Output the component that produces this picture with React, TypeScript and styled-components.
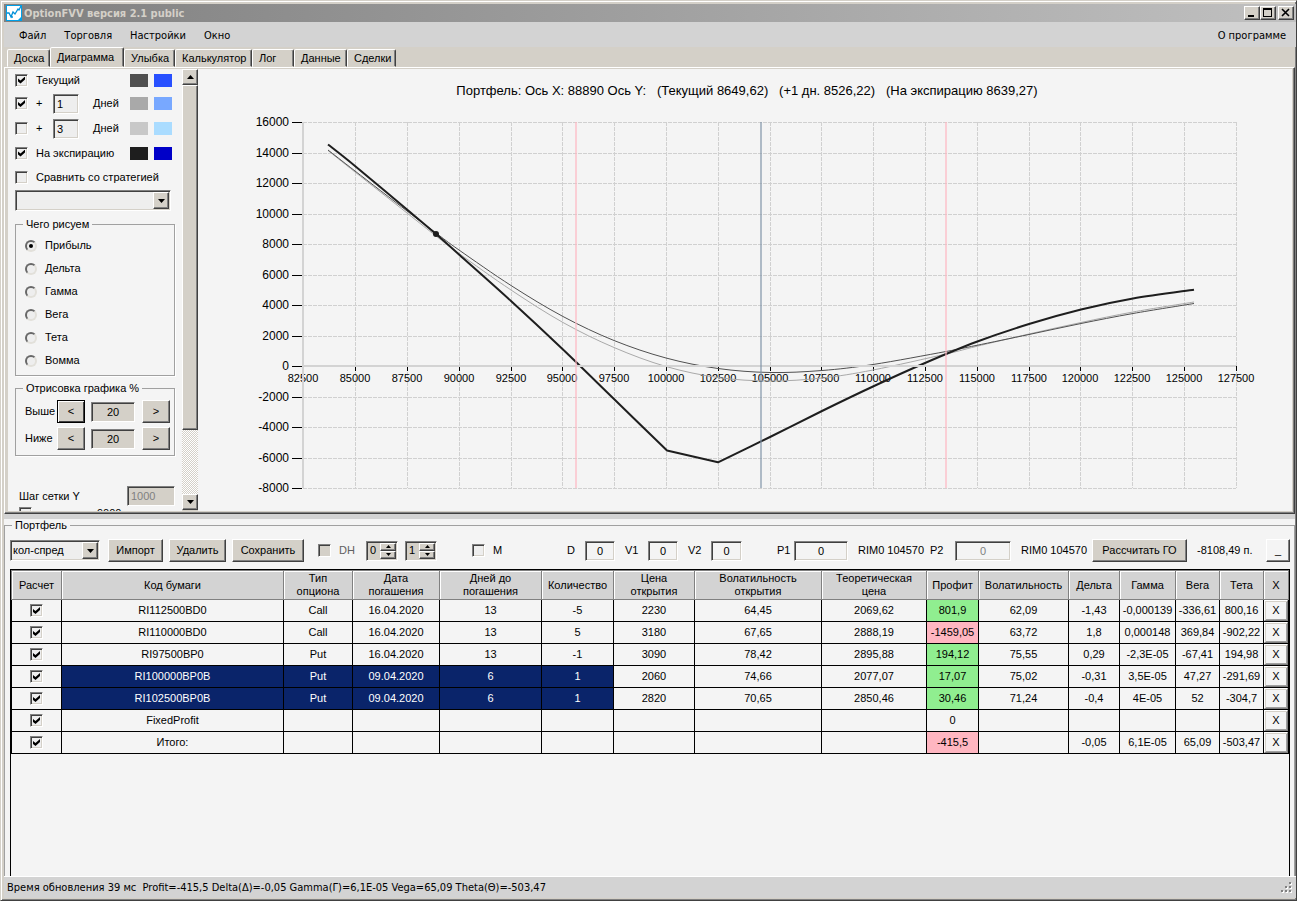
import React from "react";
import styled, { createGlobalStyle, css } from "styled-components";

const face = "#d4d0c8";
const paper = "#f4f4f4";
const bar = "#d3d3d3";
const shade = "#808080";
const dark = "#404040";

const raised = css`
  border: 1px solid;
  border-color: #fff ${dark} ${dark} #fff;
  box-shadow: inset -1px -1px 0 ${shade};
`;

const sunken = css`
  border: 1px solid;
  border-color: ${shade} #fff #fff ${shade};
  box-shadow: inset 1px 1px 0 ${dark}, inset -1px -1px 0 ${face};
`;

const GlobalStyle = createGlobalStyle`
  *, *::before, *::after { box-sizing: border-box; }
  body {
    margin: 0;
    background: ${face};
    color: #000;
    font-family: "Liberation Sans", Arial, sans-serif;
    font-size: 11px;
    line-height: 13px;
  }
  button, input, select { font: inherit; color: inherit; margin: 0; border-radius: 0; }
`;

const Window = styled.div`
  min-height: 100vh;
  display: flex;
  flex-direction: column;
  background: ${face};
  border: 1px solid;
  border-color: ${face} ${dark} ${dark} ${face};
  box-shadow: inset 1px 1px 0 #fff, inset -1px -1px 0 ${shade};
  padding: 3px 0 2px 3px;
`;

const TitleBar = styled.header`
  height: 18px;
  display: flex;
  align-items: center;
  gap: 2px;
  padding: 0 2px;
  background: linear-gradient(to right, #808080, #c0c0c0);
`;

const Title = styled.h1`
  flex: 1;
  margin: 0;
  color: ${face};
  font-family: "DejaVu Sans Condensed", Tahoma, sans-serif;
  font-size: 11px;
  font-weight: bold;
`;

const CaptionButtons = styled.div`
  display: flex;
`;

const CaptionButton = styled.button`
  ${raised}
  width: 16px;
  height: 14px;
  padding: 0;
  display: grid;
  place-items: center;
  background: ${face};
  &:last-child { margin-left: 2px; }
`;

const MenuBar = styled.nav`
  height: 25px;
  display: flex;
  align-items: center;
  background: ${bar};
  padding: 2px 1px 0 6px;
`;

const MenuItem = styled.button`
  border: 0;
  background: none;
  padding: 0 9px;
  font-family: "DejaVu Sans Condensed", Tahoma, sans-serif;
  &:last-child { margin-left: auto; }
`;

const TabStrip = styled.div`
  height: 20px;
  display: flex;
  align-items: flex-end;
  padding-left: 3px;
`;

const Tab = styled.button<{ $active?: boolean; $width: number }>`
  width: ${(p) => p.$width}px;
  height: ${(p) => (p.$active ? 20 : 18)}px;
  flex: none;
  white-space: nowrap;
  padding: 0 0 0 6px;
  text-align: left;
  background: ${face};
  border: 1px solid;
  border-color: #fff ${dark} transparent #fff;
  border-radius: 2px 2px 0 0;
  box-shadow: inset -1px 0 0 ${shade};
`;

const TabPage = styled.section`
  height: 447px;
  flex: none;
  display: flex;
  border: 1px solid;
  border-color: #fff ${dark} ${dark} #fff;
  box-shadow: inset -1px -1px 0 ${shade};
  margin-right: 1px;
  padding: 1px 2px 3px 3px;
`;

const Sidebar = styled.aside`
  width: 174px;
  height: 442px;
  flex: none;
  overflow: hidden;
  background: ${paper};
  padding: 0 7px;
`;

const OptionRow = styled.div<{ $height: number; $indent?: number }>`
  height: ${(p) => p.$height}px;
  padding-left: ${(p) => p.$indent || 0}px;
  display: flex;
  align-items: center;
`;

const OptionLabel = styled.label<{ $width?: number; $gap?: number }>`
  display: flex;
  align-items: center;
  gap: ${(p) => p.$gap || 8}px;
  white-space: nowrap;
  width: ${(p) => (p.$width ? p.$width + "px" : "auto")};
`;

const Swatches = styled.span`
  display: flex;
  gap: 6px;
  margin-left: auto;
  margin-right: 3px;
`;

const Swatch = styled.button<{ $color: string }>`
  width: 18px;
  height: 13px;
  border: 0;
  padding: 0;
  background: ${(p) => p.$color};
`;

const Check = styled.input.attrs({ type: "checkbox" })`
  ${sunken}
  appearance: none;
  flex: none;
  width: 13px;
  height: 13px;
  background: ${(p) => (p.disabled ? face : "#eee")};
  display: grid;
  place-items: center;
  &:checked::before {
    content: "";
    width: 7px;
    height: 7px;
    background: #000;
    clip-path: polygon(0 28%, 36% 57%, 100% 0, 100% 43%, 36% 100%, 0 71%);
  }
`;

const Radio = styled.input.attrs({ type: "radio" })`
  appearance: none;
  flex: none;
  width: 12px;
  height: 12px;
  border: 2px solid;
  border-color: #686868 #e2e0da #e2e0da #686868;
  border-radius: 50%;
  background: #eee;
  display: grid;
  place-items: center;
  &:checked::before {
    content: "";
    width: 4px;
    height: 4px;
    border-radius: 50%;
    background: #000;
  }
`;

const TextBox = styled.input<{ $width: number; $center?: boolean; $fill?: string }>`
  ${sunken}
  width: ${(p) => p.$width}px;
  height: 20px;
  flex: none;
  padding: 0 3px;
  outline: 0;
  text-align: ${(p) => (p.$center ? "center" : "left")};
  background: ${(p) => p.$fill || paper};
  &:disabled { color: ${shade}; }
`;

const DaysWord = styled.span`
  margin-left: 14px;
`;

const SelectBox = styled.span<{ $width: number }>`
  ${sunken}
  width: ${(p) => p.$width}px;
  height: 21px;
  display: flex;
  padding: 1px;
  background: #eee;
`;

const Select = styled.select`
  appearance: none;
  flex: 1;
  min-width: 0;
  border: 0;
  padding: 0 1px;
  outline: 0;
  background: transparent;
`;

const Arrow = styled.span`
  ${raised}
  width: 16px;
  display: grid;
  place-items: center;
  background: ${face};
`;

const Group = styled.fieldset`
  min-width: 0;
  margin: 6px 0 0;
  padding: 3px 4px 3px 9px;
  width: 160px;
  border: 1px solid #a0a0a0;
  box-shadow: 1px 1px 0 #fff;
  & > legend { padding: 0 3px; margin-left: -2px; }
`;

const GroupTitle = styled.legend`
  line-height: 13px;
`;

const StepRow = styled.div`
  height: 27px;
  display: grid;
  grid-template-columns: 32px 28px 6px 44px 7px 28px;
  align-items: center;
  & > :nth-child(3) { grid-column: 4; }
  & > :nth-child(4) { grid-column: 6; }
`;

const Button = styled.button<{ $width: number; $focus?: boolean; $fill?: string }>`
  ${raised}
  width: ${(p) => p.$width}px;
  height: 23px;
  padding: 0;
  white-space: nowrap;
  background: ${(p) => p.$fill || face};
  ${(p) => p.$focus && "border-color: #000; box-shadow: inset 1px 1px 0 #fff, inset -1px -1px 0 #404040;"}
`;

const ScrollBar = styled.div`
  width: 16px;
  flex: none;
  display: flex;
  flex-direction: column;
  background: repeating-conic-gradient(#fff 0 25%, ${face} 0 50%) 0 0 / 2px 2px;
`;

const ScrollButton = styled.button`
  ${raised}
  height: 16px;
  padding: 0;
  display: grid;
  place-items: center;
  background: ${face};
  &:last-child { margin-top: auto; }
`;

const ScrollThumb = styled.div`
  ${raised}
  height: 345px;
  background: ${face};
`;

const ChartSvg = styled.svg`
  flex: 1;
  min-width: 0;
  height: 442px;
  background: ${paper};
  font-family: "Liberation Sans", Arial, sans-serif;
`;

const Bottom = styled.main`
  flex: 1;
  display: flex;
  background: ${paper};
  border-top: 5px solid ${bar};
  margin-right: 1px;
`;

const Portfolio = styled.fieldset`
  flex: 1;
  min-width: 0;
  display: flex;
  flex-direction: column;
  margin: 0;
  padding: 0 4px 0 5px;
  border: 1px solid #a0a0a0;
  border-bottom: 0;
  & > legend { padding: 0 3px; margin-left: 2px; }
`;

const Toolbar = styled.div`
  height: 37px;
  display: grid;
  grid-template-columns: 98px 61px 63px 86px 48px 39px 67px 95px 58px 63px 89px 81px 72px 91px 71px 105px 1fr 24px;
  align-items: center;
  white-space: nowrap;
`;

const Field = styled.label<{ $width?: number; $muted?: boolean }>`
  width: ${(p) => (p.$width ? p.$width + "px" : "auto")};
  display: flex;
  align-items: center;
  justify-content: ${(p) => (p.$width ? "space-between" : "flex-start")};
  gap: ${(p) => (p.$width ? 0 : 8)}px;
  color: ${(p) => (p.$muted ? "#606060" : "#000")};
`;

const Spinner = styled.span`
  ${sunken}
  width: 32px;
  height: 20px;
  display: flex;
  padding: 1px;
  background: ${face};
`;

const SpinValue = styled.input`
  width: 12px;
  border: 0;
  padding: 0 0 0 2px;
  background: none;
`;

const SpinButtons = styled.span`
  flex: 1;
  display: grid;
  grid-template-rows: 1fr 1fr;
`;

const SpinButton = styled.button`
  ${raised}
  padding: 0;
  display: grid;
  place-items: center;
  background: ${face};
`;

const GridFrame = styled.div`
  flex: 1;
  border: 1px solid #000;
  border-bottom: 0;
`;

const Grid = styled.table`
  width: 100%;
  table-layout: fixed;
  border-collapse: separate;
  border-spacing: 0;
`;

const HeadCell = styled.th`
  height: 30px;
  padding: 0;
  font-weight: normal;
  background: ${bar};
  border: solid ${shade};
  border-width: 1px 1px 1px 0;
  box-shadow: inset 1px 1px 0 #fff;
  white-space: pre-line;
  &:first-child { border-left-width: 1px; }
`;

const Cell = styled.td<{ $tone?: "good" | "bad" | "selected" }>`
  height: 22px;
  padding: 0;
  text-align: center;
  white-space: nowrap;
  border: solid #000;
  border-width: 0 1px 1px 0;
  background: ${(p) => ({ good: "#90ee90", bad: "#ffb6c1", selected: "#0a246a", none: paper })[p.$tone || "none"]};
  color: ${(p) => (p.$tone === "selected" ? "#fff" : "#000")};
  &:first-child { border-left-width: 1px; }
  & > input { margin: 0 auto; }
`;

const DeleteButton = styled.button`
  display: block;
  width: 100%;
  height: 21px;
  padding: 0;
  border: 1px solid;
  border-color: #fff ${shade} ${shade} #fff;
  box-shadow: inset 1px 1px 0 ${face}, inset -1px -1px 0 #a0a0a0;
  background: ${paper};
`;

const StatusBar = styled.footer`
  height: 22px;
  flex: none;
  display: flex;
  align-items: center;
  justify-content: space-between;
  padding: 0 3px;
  border-top: 1px solid #fff;
  background: ${bar};
  font-family: "DejaVu Sans Condensed", Tahoma, sans-serif;
  white-space: pre;
`;

const Triangle = ({ up, small }: { up?: boolean; small?: boolean }) => (
  <svg width={small ? 5 : 7} height={small ? 3 : 4} viewBox="0 0 7 4" aria-hidden="true">
    <path d={up ? "M0 4h7L3.500 0z" : "M0 0h7L3.500 4z"} />
  </svg>
);

const tabs: [string, number][] = [
  ["Доска", 43], ["Диаграмма", 74], ["Улыбка", 51], ["Калькулятор", 77],
  ["Лог", 42], ["Данные", 53], ["Сделки", 49],
];

const metrics = ["Прибыль", "Дельта", "Гамма", "Вега", "Тета", "Вомма"];

type Point = [number, number];

const currentCurve: Point[] = [
  [328, 150], [355, 171], [407, 211], [436, 233], [459, 250], [511, 285.500], [563, 316.500], [614, 340.500], [666, 358],
  [718, 368.500], [770, 372.500], [822, 370.500], [873, 364.500], [946, 351.500], [976, 345.500],
  [1029, 334.500], [1081, 323.500], [1133, 313.500], [1194, 303.500],
];

const nextDayCurve: Point[] = [
  [328, 150.500], [355, 172], [407, 213], [436, 236], [459, 253.500], [511, 290], [563, 322.500], [614, 347.500],
  [666, 366.500], [718, 377.500], [770, 381], [822, 378], [873, 370], [946, 354], [976, 346.500],
  [1029, 334], [1081, 322.500], [1133, 312], [1194, 302],
];

const expiryLeft: Point[] = [
  [328, 144.500], [355, 166], [407, 209.500], [436, 234], [459, 254.500], [511, 301], [563, 349.500], [614, 399], [667, 450.500],
];

const expiryRight: Point[] = [
  [718, 462.300], [770, 437], [822, 411], [873, 386.500], [925, 363], [976, 342], [1029, 324],
  [1081, 309.500], [1133, 298.500], [1194, 289.700],
];

/* Catmull-Rom spline through the points, written as cubic Béziers. */
function smooth(points: Point[]): string {
  let d = `M${points[0][0]} ${points[0][1]}`;
  for (let i = 0; i < points.length - 1; i++) {
    const p0 = points[Math.max(i - 1, 0)];
    const p1 = points[i];
    const p2 = points[i + 1];
    const p3 = points[Math.min(i + 2, points.length - 1)];
    d += ` C${p1[0] + (p2[0] - p0[0]) / 6} ${p1[1] + (p2[1] - p0[1]) / 6}`;
    d += ` ${p2[0] - (p3[0] - p1[0]) / 6} ${p2[1] - (p3[1] - p1[1]) / 6} ${p2[0]} ${p2[1]}`;
  }
  return d;
}

const xTicks = Array.from({ length: 19 }, (_, i) => 82500 + i * 2500);
const yTicks = Array.from({ length: 13 }, (_, i) => -8000 + i * 2000);
const xPos = (v: number) => Math.round(303.400 + ((v - 82500) * 932.500) / 45000);
const yPos = (v: number) => Math.round(366 - (v * 244) / 16000);

function Chart() {
  return (
    <ChartSvg viewBox="198 69 1094 442" role="img" aria-label="Диаграмма портфеля">
      <text x="747" y="95" fontSize="13" textAnchor="middle" xmlSpace="preserve">
        {"Портфель: Ось X: 88890 Ось Y:\u00a0\u00a0 (Текущий 8649,62)\u00a0\u00a0 (+1 дн. 8526,22)\u00a0\u00a0 (На экспирацию 8639,27)"}
      </text>
      <g stroke="#d0d0d0" strokeDasharray="4 1" shapeRendering="crispEdges">
        {xTicks.slice(1).map((v) => <line key={v} x1={xPos(v)} x2={xPos(v)} y1="122" y2="488" />)}
        {yTicks.filter((v) => v !== 0).map((v) => <line key={v} x1="303" x2="1236" y1={yPos(v)} y2={yPos(v)} />)}
      </g>
      <g stroke="#000" shapeRendering="crispEdges">
        {xTicks.map((v) => <line key={v} x1={xPos(v)} x2={xPos(v)} y1="366" y2="371" />)}
        {yTicks.map((v) => <line key={v} x1="292" x2="302" y1={yPos(v)} y2={yPos(v)} />)}
      </g>
      <g fontSize="12" textAnchor="end">
        {yTicks.map((v) => <text key={v} x="289" y={yPos(v) + 4}>{v}</text>)}
      </g>
      <g fontSize="11" textAnchor="middle">
        {xTicks.map((v) => <text key={v} x={xPos(v)} y="382">{v}</text>)}
      </g>
      <g fill="none" strokeLinejoin="round">
        <path d={smooth(nextDayCurve)} stroke="#a9a9a9" />
        <path d={smooth(currentCurve)} stroke="#505050" />
        <path d={smooth(expiryLeft) + smooth(expiryRight).replace("M", " L")} stroke="#1e1e1e" strokeWidth="2" />
      </g>
      <g stroke="#d3d3d3" strokeWidth="2" shapeRendering="crispEdges">
        <line x1="303" x2="303" y1="122" y2="488" />
        <line x1="303" x2="1236" y1="366" y2="366" />
      </g>
      <g strokeWidth="2" shapeRendering="crispEdges" opacity="0.6">
        <line x1="576" x2="576" y1="122" y2="488" stroke="#ffb6c1" />
        <line x1="761" x2="761" y1="122" y2="488" stroke="#8094a8" />
        <line x1="946" x2="946" y1="122" y2="488" stroke="#ffb6c1" />
      </g>
      <circle cx="436" cy="234" r="3" fill="#1e1e1e" />
    </ChartSvg>
  );
}

function ColorPair({ a, b }: { a: string; b: string }) {
  return (
    <Swatches>
      <Swatch $color={a} aria-label="Цвет до" />
      <Swatch $color={b} aria-label="Цвет после" />
    </Swatches>
  );
}

function Settings() {
  return (
    <Sidebar>
      <OptionRow $height={22}>
        <OptionLabel><Check defaultChecked />Текущий</OptionLabel>
        <ColorPair a="#505050" b="#2850ff" />
      </OptionRow>
      <OptionRow $height={25}>
        <OptionLabel $width={38}><Check defaultChecked />+</OptionLabel>
        <TextBox $width={26} $fill="#eee" defaultValue="1" aria-label="Дней вперёд" />
        <DaysWord>Дней</DaysWord>
        <ColorPair a="#a9a9a9" b="#78a8ff" />
      </OptionRow>
      <OptionRow $height={25}>
        <OptionLabel $width={38}><Check />+</OptionLabel>
        <TextBox $width={26} $fill="#eee" defaultValue="3" aria-label="Дней вперёд" />
        <DaysWord>Дней</DaysWord>
        <ColorPair a="#c8c8c8" b="#aadcff" />
      </OptionRow>
      <OptionRow $height={24}>
        <OptionLabel><Check defaultChecked />На экспирацию</OptionLabel>
        <ColorPair a="#1e1e1e" b="#0000c8" />
      </OptionRow>
      <OptionRow $height={24}>
        <OptionLabel><Check />Сравнить со стратегией</OptionLabel>
      </OptionRow>
      <OptionRow $height={23}>
        <SelectBox $width={156}>
          <Select aria-label="Стратегия"><option></option></Select>
          <Arrow><Triangle /></Arrow>
        </SelectBox>
      </OptionRow>
      <Group>
        <GroupTitle>Чего рисуем</GroupTitle>
        {metrics.map((m, i) => (
          <OptionRow key={m} $height={23}>
            <OptionLabel><Radio name="metric" defaultChecked={i === 0} />{m}</OptionLabel>
          </OptionRow>
        ))}
      </Group>
      <Group>
        <GroupTitle>Отрисовка графика %</GroupTitle>
        {["Выше", "Ниже"].map((name, i) => (
          <StepRow key={name}>
            <label htmlFor={name}>{name}</label>
            <Button $width={28} $focus={i === 0}>&lt;</Button>
            <TextBox id={name} $width={44} $center $fill={face} defaultValue="20" />
            <Button $width={28}>&gt;</Button>
          </StepRow>
        ))}
      </Group>
      <OptionRow $height={29} />
      <OptionRow $height={22} $indent={4}>
        <Field $width={156}>
          Шаг сетки Y
          <TextBox $width={48} $fill={face} disabled defaultValue="1000" />
        </Field>
      </OptionRow>
      <OptionRow $height={12} $indent={4}>
        <OptionLabel $gap={65}><Check />9000</OptionLabel>
      </OptionRow>
    </Sidebar>
  );
}

const columns: [string, number | undefined][] = [
  ["Расчет", 51], ["Код бумаги", undefined], ["Тип\nопциона", 69], ["Дата\nпогашения", 87],
  ["Дней до\nпогашения", 102], ["Количество", 72], ["Цена\nоткрытия", 81], ["Волатильность\nоткрытия", 127],
  ["Теоретическая\nцена", 105], ["Профит", 52], ["Волатильность", 90], ["Дельта", 51], ["Гамма", 56],
  ["Вега", 44], ["Тета", 44], ["X", 25],
];

const rows: string[][] = [
  ["RI112500BD0", "Call", "16.04.2020", "13", "-5", "2230", "64,45", "2069,62", "801,9", "62,09", "-1,43", "-0,000139", "-336,61", "800,16"],
  ["RI110000BD0", "Call", "16.04.2020", "13", "5", "3180", "67,65", "2888,19", "-1459,05", "63,72", "1,8", "0,000148", "369,84", "-902,22"],
  ["RI97500BP0", "Put", "16.04.2020", "13", "-1", "3090", "78,42", "2895,88", "194,12", "75,55", "0,29", "-2,3E-05", "-67,41", "194,98"],
  ["RI100000BP0B", "Put", "09.04.2020", "6", "1", "2060", "74,66", "2077,07", "17,07", "75,02", "-0,31", "3,5E-05", "47,27", "-291,69"],
  ["RI102500BP0B", "Put", "09.04.2020", "6", "1", "2820", "70,65", "2850,46", "30,46", "71,24", "-0,4", "4E-05", "52", "-304,7"],
  ["FixedProfit", "", "", "", "", "", "", "", "0", "", "", "", "", ""],
  ["Итого:", "", "", "", "", "", "", "", "-415,5", "", "-0,05", "6,1E-05", "65,09", "-503,47"],
];

function tone(row: number, col: number, text: string) {
  if ((row === 3 || row === 4) && col < 5) return "selected";
  if (col === 8 && text !== "0") return text.startsWith("-") ? "bad" : "good";
  return undefined;
}

function Positions() {
  return (
    <GridFrame>
      <Grid>
        <colgroup>
          {columns.map(([name, width], i) => <col key={name + i} width={width} />)}
        </colgroup>
        <thead>
          <tr>{columns.map(([name], i) => <HeadCell key={name + i}>{name}</HeadCell>)}</tr>
        </thead>
        <tbody>
          {rows.map((row, r) => (
            <tr key={row[0]}>
              <Cell><Check defaultChecked aria-label={"Расчет " + row[0]} /></Cell>
              {row.map((text, c) => <Cell key={c} $tone={tone(r, c, text)}>{text}</Cell>)}
              <Cell><DeleteButton aria-label={"Удалить " + row[0]}>X</DeleteButton></Cell>
            </tr>
          ))}
        </tbody>
      </Grid>
    </GridFrame>
  );
}

function Spin({ value, label }: { value: string; label: string }) {
  return (
    <Spinner>
      <SpinValue defaultValue={value} aria-label={label} />
      <SpinButtons>
        <SpinButton aria-label="Больше"><Triangle up small /></SpinButton>
        <SpinButton aria-label="Меньше"><Triangle small /></SpinButton>
      </SpinButtons>
    </Spinner>
  );
}

export default function App() {
  return (
    <Window>
      <GlobalStyle />
      <TitleBar>
        <svg width="16" height="16" viewBox="0 0 16 16" aria-hidden="true">
          <rect width="16" height="16" fill="#00a0e8" />
          <path d="M1 1h14v11l-3 3H1z" fill="#fff" />
          <path d="M1 8h2l2 4 2-5 2 2 3-5 1 1 2-4M5 12h2" fill="none" stroke="#0090d8" strokeWidth="1.300" />
        </svg>
        <Title>OptionFVV версия 2.1 public</Title>
        <CaptionButtons>
          <CaptionButton aria-label="Свернуть">
            <svg width="12" height="10" viewBox="0 0 12 10"><path d="M2 7h6v2H2z" /></svg>
          </CaptionButton>
          <CaptionButton aria-label="Развернуть">
            <svg width="12" height="10" viewBox="0 0 12 10"><path d="M1 0h9v9H1zM2 2v6h7V2z" fillRule="evenodd" /></svg>
          </CaptionButton>
          <CaptionButton aria-label="Закрыть">
            <svg width="12" height="10" viewBox="0 0 12 10"><path d="M2 1l7 7M9 1l-7 7" stroke="#000" strokeWidth="1.600" /></svg>
          </CaptionButton>
        </CaptionButtons>
      </TitleBar>
      <MenuBar>
        {["Файл", "Торговля", "Настройки", "Окно", "О программе"].map((m) => <MenuItem key={m}>{m}</MenuItem>)}
      </MenuBar>
      <TabStrip role="tablist">
        {tabs.map(([name, width], i) => (
          <Tab key={name} role="tab" aria-selected={i === 1} $active={i === 1} $width={width}>{name}</Tab>
        ))}
      </TabStrip>
      <TabPage>
        <Settings />
        <ScrollBar>
          <ScrollButton aria-label="Вверх"><Triangle up /></ScrollButton>
          <ScrollThumb />
          <ScrollButton aria-label="Вниз"><Triangle /></ScrollButton>
        </ScrollBar>
        <Chart />
      </TabPage>
      <Bottom>
        <Portfolio>
          <GroupTitle>Портфель</GroupTitle>
          <Toolbar>
            <SelectBox $width={90}>
              <Select aria-label="Портфель"><option>кол-спред</option></Select>
              <Arrow><Triangle /></Arrow>
            </SelectBox>
            <Button $width={55}>Импорт</Button>
            <Button $width={57}>Удалить</Button>
            <Button $width={72}>Сохранить</Button>
            <Field $muted><Check disabled />DH</Field>
            <Spin value="0" label="DH от" />
            <Spin value="1" label="DH до" />
            <Field><Check />M</Field>
            <Field $width={48}>D<TextBox $width={30} $center defaultValue="0" /></Field>
            <Field $width={53}>V1<TextBox $width={30} $center defaultValue="0" /></Field>
            <Field $width={54}>V2<TextBox $width={31} $center defaultValue="0" /></Field>
            <Field $width={71}>P1<TextBox $width={54} $center defaultValue="0" /></Field>
            <span>RIM0 104570</span>
            <Field $width={81}>P2<TextBox $width={56} $center disabled defaultValue="0" /></Field>
            <span>RIM0 104570</span>
            <Button $width={95}>Рассчитать ГО</Button>
            <span>-8108,49 п.</span>
            <Button $width={24} $fill={paper}>_</Button>
          </Toolbar>
          <Positions />
        </Portfolio>
      </Bottom>
      <StatusBar>
        <span>{"Время обновления 39 мс  Profit=-415,5 Delta(Δ)=-0,05 Gamma(Γ)=6,1E-05 Vega=65,09 Theta(Θ)=-503,47"}</span>
        <svg width="12" height="12" viewBox="0 0 12 12" aria-hidden="true">
          <path d="M9 1h2v2H9zM5 5h2v2H5zM9 5h2v2H9zM1 9h2v2H1zM5 9h2v2H5zM9 9h2v2H9z" fill="#fff" />
          <path d="M8 0h2v2H8zM4 4h2v2H4zM8 4h2v2H8zM0 8h2v2H0zM4 8h2v2H4zM8 8h2v2H8z" fill="#808080" />
        </svg>
      </StatusBar>
    </Window>
  );
}
